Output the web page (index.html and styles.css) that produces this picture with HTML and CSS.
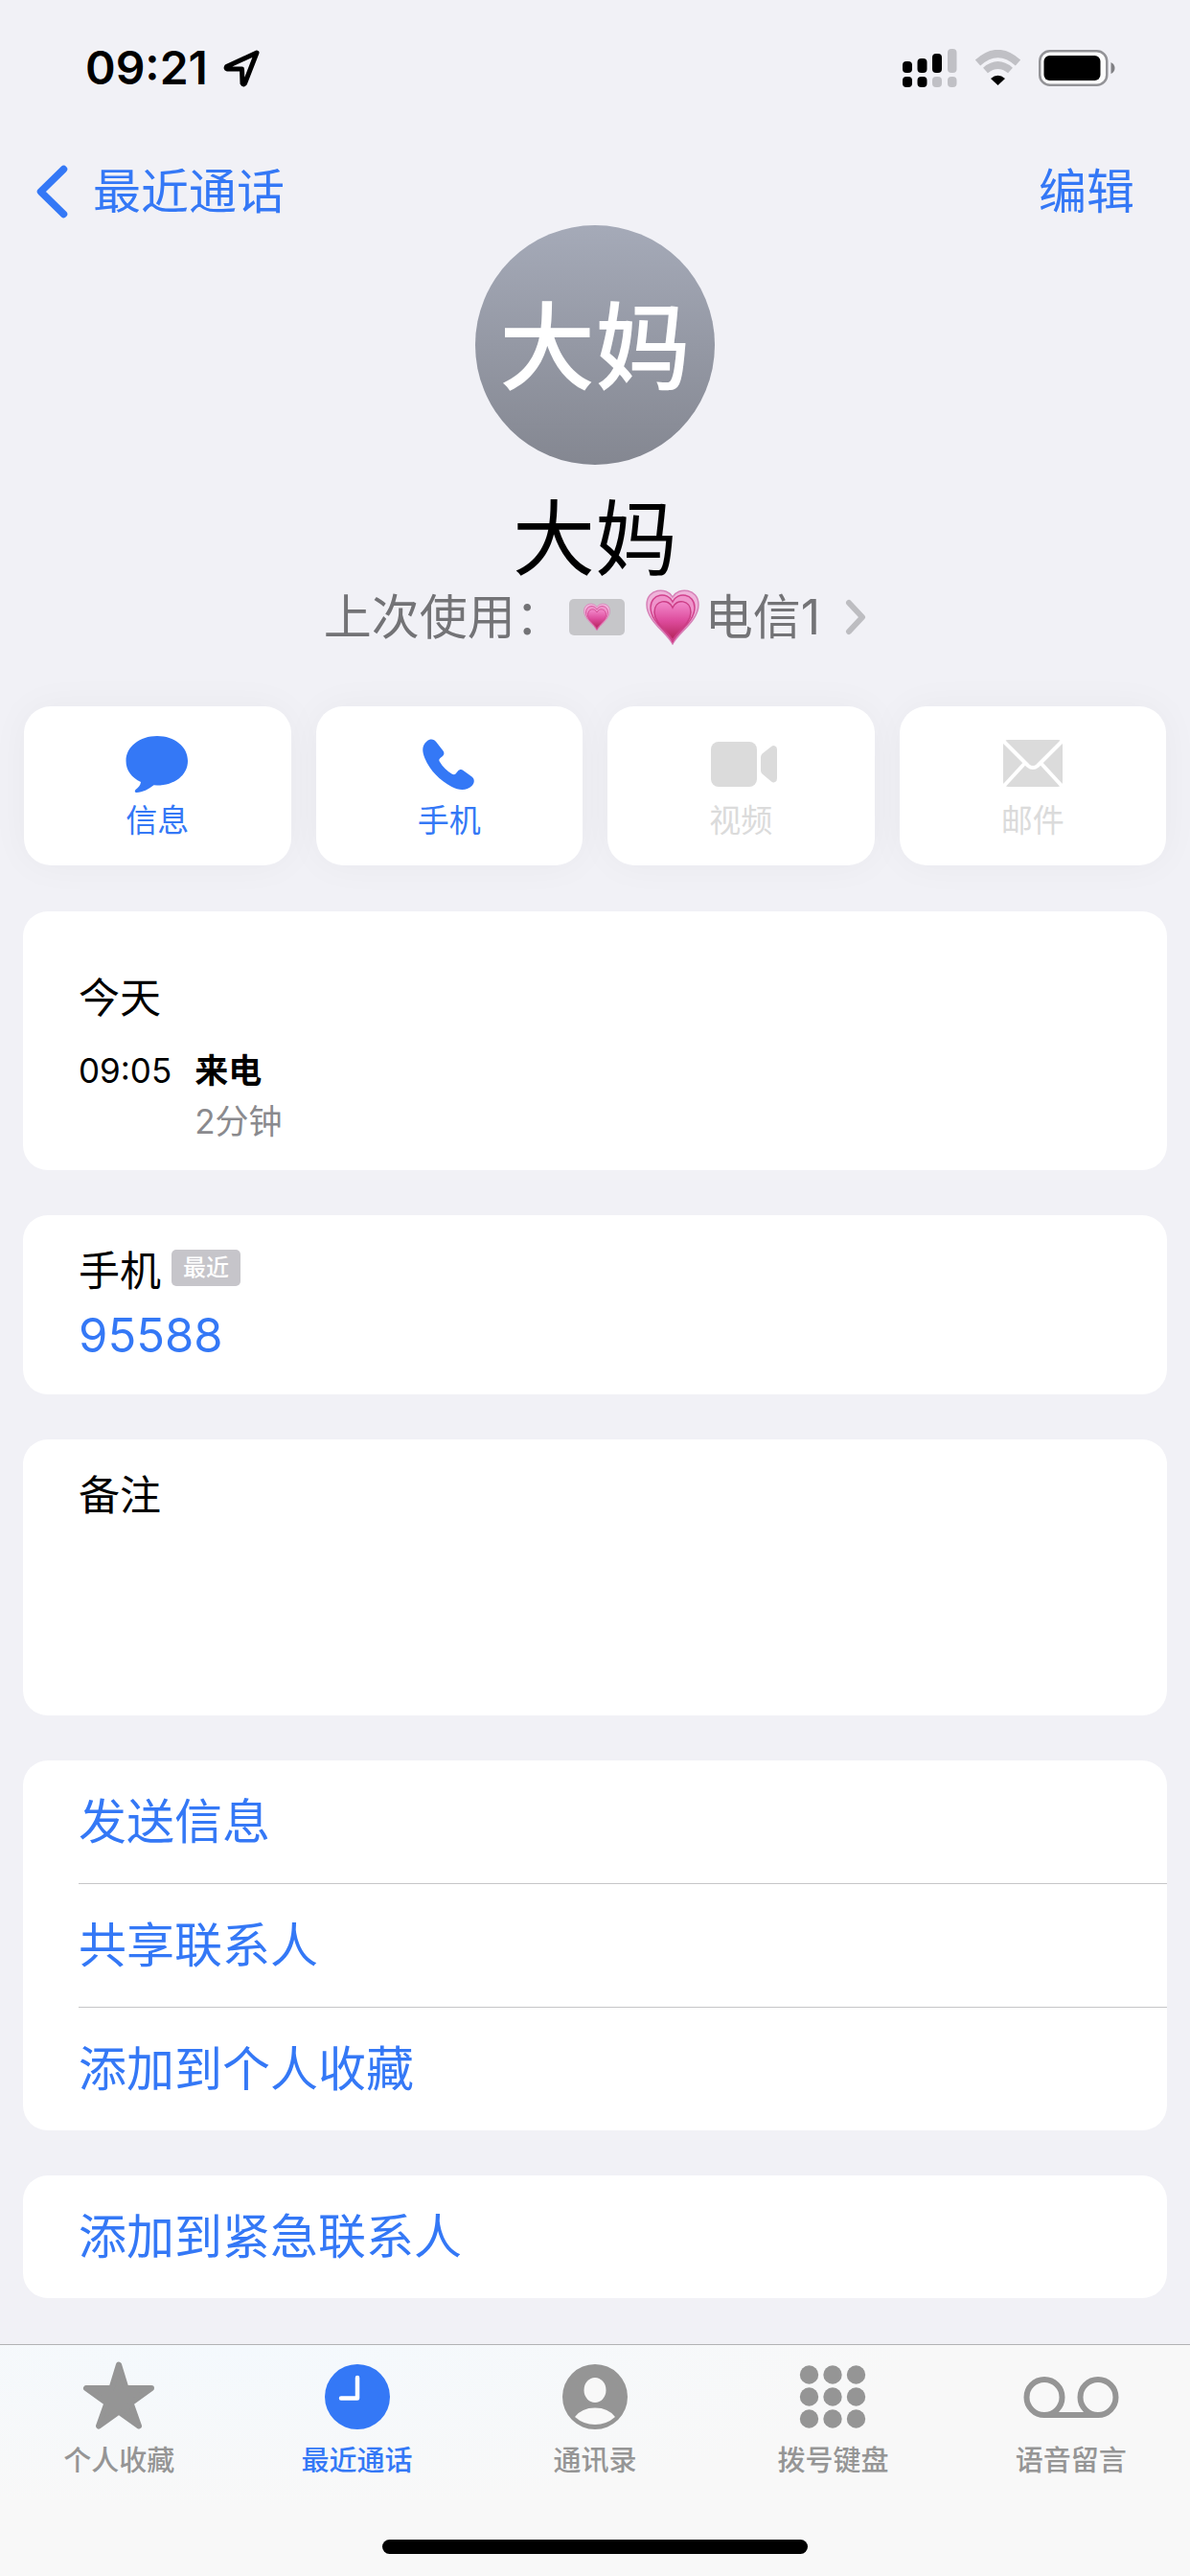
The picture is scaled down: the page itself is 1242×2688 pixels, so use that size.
FILE: index.html
```html
<!DOCTYPE html>
<html lang="zh-CN">
<head>
    <meta charset="UTF-8">
    <meta name="viewport" content="width=device-width, initial-scale=1.0">
    <title>大妈</title>
    <link rel="stylesheet" href="styles.css">
</head>
<body>
    <div class="status-bar">
        <div class="status-left">
            <span class="time">09:21</span>
            <svg width="38" height="40" viewBox="0 0 38 40" fill="none" stroke="#000" stroke-width="5" stroke-linejoin="round">
                <path d="M35 4 L3.500 18.500 Q2.500 20.500 4 21 L19.500 21 L20 36 Q21 38 22.500 36 Z"/>
            </svg>
        </div>
        <div class="status-right">
            <svg width="57" height="40" viewBox="0 0 57 40">
                <rect x="0" y="13" width="10" height="12" rx="4"/>
                <rect x="15.500" y="10" width="10" height="15" rx="4"/>
                <rect x="31" y="5" width="10" height="20" rx="4"/>
                <rect x="47" y="0" width="9.500" height="25" rx="4" fill="#c0c0c5"/>
                <rect x="0" y="29" width="10" height="11" rx="4"/>
                <rect x="15.500" y="29" width="10" height="11" rx="4"/>
                <rect x="31" y="29" width="10" height="11" rx="4" fill="#c0c0c5"/>
                <rect x="47" y="29" width="9.500" height="11" rx="4" fill="#c0c0c5"/>
            </svg>
            <svg width="49" height="38" viewBox="0 0 49 38">
                <path d="M3.500 13.500 Q24.500 -5.500 45.500 13.500" fill="none" stroke="#c0c0c5" stroke-width="8"/>
                <path d="M11.500 21.500 Q24.500 10.500 37.500 21.500" fill="none" stroke="#c0c0c5" stroke-width="7.500"/>
                <path d="M17 30 Q24.500 23.500 32 30 L24.500 37 Z"/>
            </svg>
            <svg width="80" height="38" viewBox="0 0 80 38">
                <rect x="1.250" y="1.250" width="70" height="35.500" rx="10.500" fill="#fcfcfc" stroke="#939397" stroke-width="2.500"/>
                <rect x="5.500" y="6" width="59" height="26" rx="6"/>
                <path d="M75.500 13 Q79.500 15 79.500 19 Q79.500 23 75.500 25 Z" fill="#808084"/>
            </svg>
        </div>
    </div>

    <nav class="nav-bar">
        <button type="button" class="nav-button">
            <svg width="34" height="56" viewBox="0 0 34 56" fill="none" stroke="currentColor" stroke-width="7.500" stroke-linecap="round" stroke-linejoin="round">
                <path d="M28.500 4.500 L4.500 28 L28.500 51.500"/>
            </svg>
            最近通话
        </button>
        <button type="button" class="nav-button">编辑</button>
    </nav>

    <main>
        <header class="contact">
            <div class="avatar">大妈</div>
            <h1 class="contact-name">大妈</h1>
            <button type="button" class="last-used">
                <span>上次使用：</span>
                <span class="sim-badge">
                    <svg width="28" height="30" viewBox="0 0 56 58"><use href="#heart"/></svg>
                </span>
                <svg class="line-heart" width="56" height="58" viewBox="0 0 56 58">
                    <defs>
                        <linearGradient id="heart-fill" x1="0" y1="0" x2="0" y2="1">
                            <stop offset="0" stop-color="#f38bcc"/>
                            <stop offset="0.500" stop-color="#dd4b9c"/>
                            <stop offset="1" stop-color="#b32357"/>
                        </linearGradient>
                    </defs>
                    <g id="heart">
                        <path d="M28 57 C22 45 1 33 1 16 C1 -1 22 -3 28 8 C34 -3 55 -1 55 16 C55 33 34 45 28 57 Z" fill="#efb3da" stroke="#d782b8" stroke-width="1.500"/>
                        <path d="M28 55 C23 44 5 34 5 19 C5 4 23 2 28 13 C33 2 51 4 51 19 C51 34 33 44 28 55 Z" fill="#ef94cb" stroke="#d2438e" stroke-width="1.500"/>
                        <path d="M28 53 C24 44 9 36 9 24 C9 11 24 9 28 19 C32 9 47 11 47 24 C47 36 32 44 28 53 Z" fill="url(#heart-fill)" stroke="#cb3d85" stroke-width="1.500"/>
                    </g>
                </svg>
                <span>电信1</span>
                <svg class="more" width="22" height="38" viewBox="0 0 22 38" fill="none" stroke="#bdbdc1" stroke-width="6" stroke-linecap="round" stroke-linejoin="round">
                    <path d="M4 4 L18 19 L4 34"/>
                </svg>
            </button>
        </header>

        <div class="actions">
            <button type="button" class="action">
                <svg width="72" height="64" viewBox="0 0 72 64" fill="currentColor">
                    <path d="M36 4 C54 4 68 15 68 30 C68 45 54 55.500 36 55.500 L32.500 55.300 C27 59.500 21 63 14.500 63 C12.500 63 12.300 61 13.500 60 C16.500 57.500 18.500 55.500 19 52 C9.500 47.500 3.500 40 3.500 30 C3.500 15 18 4 36 4 Z"/>
                </svg>
                信息
            </button>
            <button type="button" class="action">
                <svg width="72" height="64" viewBox="0 0 72 64" fill="currentColor">
                    <path d="M12.500 9.500 C16 6.500 20 7 22.500 10.500 L29.500 19.500 C31 21.500 30.500 23.500 29 25 L26.500 27 C25 28.500 25 29.500 26 31 C29 36 33.500 40.500 38.500 43.500 C40 44.500 41.500 44.500 42.500 43.500 L45 40.500 C46.500 39 48.500 38.500 50.500 40 L59.500 46.500 C62.500 49 62.500 53 59.500 56 C54 61.500 46 61 38.500 57 C26 50.500 15.500 39.500 10.500 27.500 C7.500 20 7 14 12.500 9.500 Z"/>
                </svg>
                手机
            </button>
            <button type="button" class="action" disabled>
                <svg width="80" height="64" viewBox="0 0 80 64" fill="currentColor">
                    <rect x="9" y="10" width="48" height="47" rx="8"/>
                    <path d="M61 26 Q61 24 62.500 22.500 L72 15 Q74 13.500 76 14.500 Q78 15 78 18 L78 48 Q78 51 76 52 Q74 53 72 51.500 L62.500 43.500 Q61 42 61 40 Z"/>
                </svg>
                视频
            </button>
            <button type="button" class="action" disabled>
                <svg width="72" height="64" viewBox="0 0 72 64">
                    <rect x="5" y="8" width="62" height="49" rx="5" fill="currentColor"/>
                    <path d="M4 8 L31 35 Q36 39 41 35 L68 8 M4 58 L27 33 M68 58 L45 33" fill="none" stroke="#fff" stroke-width="4"/>
                </svg>
                邮件
            </button>
        </div>

        <section class="card call-log">
            <h2>今天</h2>
            <dl>
                <dt>09:05</dt>
                <dd class="call-type">来电</dd>
                <dd class="call-length">2分钟</dd>
            </dl>
        </section>

        <section class="card phone">
            <h2>手机 <span class="tag">最近</span></h2>
            <a href="tel:95588">95588</a>
        </section>

        <section class="card notes">
            <label for="notes">备注</label>
            <textarea id="notes"></textarea>
        </section>

        <section class="card list">
            <button type="button">发送信息</button>
            <button type="button">共享联系人</button>
            <button type="button">添加到个人收藏</button>
        </section>

        <section class="card list">
            <button type="button">添加到紧急联系人</button>
        </section>
    </main>

    <footer class="tab-bar">
        <nav class="tabs">
            <a href="#favorites" class="tab">
                <svg width="100" height="72" viewBox="0 0 100 72" fill="currentColor" stroke="currentColor" stroke-width="6" stroke-linejoin="round">
                    <path d="M50 3.500 L57.500 28 L84 28 L62.500 43.500 L71 67.500 L50 52.500 L29 67.500 L37.500 43.500 L16 28 L42.500 28 Z"/>
                </svg>
                个人收藏
            </a>
            <a href="#recents" class="tab active">
                <svg width="100" height="72" viewBox="0 0 100 72">
                    <circle cx="50" cy="37" r="34" fill="currentColor"/>
                    <path d="M50 17 L50 38.500 L33 38.500" fill="none" stroke="#fff" stroke-width="4.500" stroke-linecap="round" stroke-linejoin="round"/>
                </svg>
                最近通话
            </a>
            <a href="#contacts" class="tab">
                <svg width="100" height="72" viewBox="0 0 100 72" fill="#f8f8f8">
                    <circle cx="50" cy="37" r="34" fill="#959595"/>
                    <ellipse cx="50" cy="30" rx="11.500" ry="13"/>
                    <path d="M29 58 Q36 48.500 50 48.500 Q64 48.500 71 58 Q62 66 50 66 Q38 66 29 58 Z"/>
                </svg>
                通讯录
            </a>
            <a href="#keypad" class="tab">
                <svg width="100" height="72" viewBox="0 0 100 72" fill="currentColor">
                    <circle cx="25.500" cy="14" r="9.700"/>
                    <circle cx="50" cy="14" r="9.700"/>
                    <circle cx="74.500" cy="14" r="9.700"/>
                    <circle cx="25.500" cy="37" r="9.700"/>
                    <circle cx="50" cy="37" r="9.700"/>
                    <circle cx="74.500" cy="37" r="9.700"/>
                    <circle cx="25.500" cy="60" r="9.700"/>
                    <circle cx="50" cy="60" r="9.700"/>
                    <circle cx="74.500" cy="60" r="9.700"/>
                </svg>
                拨号键盘
            </a>
            <a href="#voicemail" class="tab">
                <svg width="100" height="72" viewBox="0 0 100 72" fill="none" stroke="currentColor" stroke-width="6">
                    <circle cx="22" cy="37.500" r="18.500"/>
                    <circle cx="78" cy="37.500" r="18.500"/>
                    <path d="M22 56 L78 56"/>
                </svg>
                语音留言
            </a>
        </nav>
        <div class="home-indicator"></div>
    </footer>
</body>
</html>
```
FILE: styles.css
```css
* {
    box-sizing: border-box;
}
body {
    margin: 0;
    min-height: 100vh;
    display: flex;
    flex-direction: column;
    background-color: #f1f1f6;
    color: #000;
    font-family: Inter, "Noto Sans CJK SC", sans-serif;
    font-size: 50px;
}
h1, h2, dl, dd {
    margin: 0;
    font-weight: 400;
}
button {
    border: 0;
    padding: 0;
    background: none;
    color: #3478f6;
    font: inherit;
}
a {
    color: #3478f6;
    text-decoration: none;
}
svg {
    display: block;
    flex: none;
}

.status-bar {
    display: flex;
    justify-content: space-between;
    align-items: center;
    height: 141px;
    padding: 0 78px 0 89px;
}
.status-left {
    display: flex;
    align-items: center;
    gap: 16px;
}
.status-right {
    display: flex;
    align-items: center;
    gap: 18px;
}
.time {
    font-size: 48px;
    font-weight: 600;
}

.nav-bar {
    display: flex;
    justify-content: space-between;
    margin-top: 24px;
    padding: 0 58px 0 38px;
}
.nav-button {
    display: flex;
    align-items: center;
    gap: 25px;
    line-height: 70px;
}

.contact {
    display: flex;
    flex-direction: column;
    align-items: center;
}
.avatar {
    width: 250px;
    height: 250px;
    border-radius: 50%;
    background: linear-gradient(#a5aab8, #848791);
    color: #fff;
    font-size: 100px;
    font-weight: 500;
    line-height: 256px;
    text-align: center;
}
.contact-name {
    margin-top: 27px;
    font-size: 86px;
    line-height: 102px;
}
.last-used {
    display: flex;
    align-items: center;
    line-height: 60px;
    color: #737376;
}
.sim-badge {
    display: flex;
    align-items: center;
    justify-content: center;
    width: 58px;
    height: 38px;
    margin: 0 22px 0 6px;
    border-radius: 5px;
    background-color: #c6c6c9;
}
.line-heart {
    margin-right: 6px;
}
.more {
    margin-left: 26px;
}

.actions {
    display: grid;
    grid-template-columns: repeat(4, 1fr);
    gap: 26px;
    margin: 63px 25px 48px;
}
.action {
    display: flex;
    flex-direction: column;
    align-items: center;
    gap: 8px;
    padding: 27px 0;
    border-radius: 28px;
    background-color: #fff;
    box-shadow: 0 0 40px rgba(0, 0, 0, 0.04);
    font-size: 33px;
    line-height: 40px;
}
.action:disabled {
    color: #dbdbdb;
}

.card {
    margin: 0 24px 47px;
    padding-left: 58px;
    border-radius: 26px;
    background-color: #fff;
    overflow: hidden;
}
.card h2, .card label {
    font-size: 43px;
    line-height: 60px;
}
.call-log {
    padding-top: 60px;
    padding-bottom: 24px;
}
.call-log dl {
    display: grid;
    grid-template-columns: auto 1fr;
    column-gap: 24px;
    margin-top: 20px;
    font-size: 35px;
    line-height: 53px;
}
.call-type {
    font-weight: 700;
}
.call-length {
    grid-column: 2;
    color: #8a8a8e;
}

.phone {
    padding-top: 28px;
    padding-bottom: 31px;
}
.phone h2 {
    display: flex;
    align-items: center;
    gap: 11px;
}
.phone a {
    display: block;
    margin-top: 8px;
    font-size: 49px;
    line-height: 60px;
}
.tag {
    padding: 0 12px;
    margin-bottom: 6px;
    border-radius: 5px;
    background-color: #c6c5ca;
    color: #fff;
    font-size: 24px;
    font-weight: 500;
    line-height: 38px;
}

.notes {
    padding-top: 28px;
}
.notes label {
    display: block;
}
.notes textarea {
    display: block;
    width: 100%;
    height: 200px;
    padding: 0;
    border: 0;
    background: none;
    font: inherit;
    resize: none;
}

.list button {
    display: block;
    width: 100%;
    line-height: 128px;
    text-align: left;
}
.list button + button {
    border-top: 1px solid #c6c6c8;
}

.tab-bar {
    margin-top: auto;
    padding: 17px 0 23px;
    border-top: 1px solid #b2b2b4;
    background: radial-gradient(at 20% 0, #f4f9fd, #f8f8f8 50%);
}
.tabs {
    display: grid;
    grid-template-columns: repeat(5, 1fr);
}
.tab {
    display: flex;
    flex-direction: column;
    align-items: center;
    gap: 12px;
    color: #959595;
    font-size: 29px;
    font-weight: 500;
    line-height: 40px;
}
.tab.active {
    color: #3478f6;
}
.home-indicator {
    width: 444px;
    height: 15px;
    margin: 62px auto 0;
    border-radius: 8px;
    background-color: #000;
}
```
